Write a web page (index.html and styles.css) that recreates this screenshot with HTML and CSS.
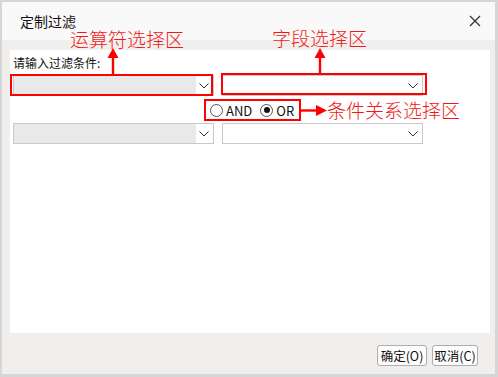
FILE: index.html
```html
<!DOCTYPE html>
<html>
<head>
    <meta charset="UTF-8">
    <title>定制过滤</title>
    <link rel="stylesheet" href="styles.css">
</head>
<body>
    <div class="window">
        <div class="titlebar">
            <span class="title">定制过滤</span>
            <svg class="close" width="12" height="12" viewBox="0 0 12 12">
                <path d="M1 1 L11 11 M11 1 L1 11" stroke="#333" stroke-width="1.3" fill="none"/>
            </svg>
        </div>

        <div class="content">
            <div class="panel">
                <div class="hint">请输入过滤条件:</div>

                <div class="row">
                    <div class="combo combo-disabled">
                        <span class="combo-value"></span>
                        <span class="combo-btn">
                            <svg width="10" height="6" viewBox="0 0 10 6"><polyline points="0.5,0.5 5,5 9.5,0.5" stroke="#333" fill="none"/></svg>
                        </span>
                    </div>
                    <div class="combo">
                        <span class="combo-value"></span>
                        <span class="combo-btn">
                            <svg width="10" height="6" viewBox="0 0 10 6"><polyline points="0.5,0.5 5,5 9.5,0.5" stroke="#333" fill="none"/></svg>
                        </span>
                    </div>
                </div>

                <div class="logic">
                    <label class="radio"><span class="dot"></span>AND</label>
                    <label class="radio checked"><span class="dot"></span>OR</label>
                </div>

                <div class="row">
                    <div class="combo combo-disabled">
                        <span class="combo-value"></span>
                        <span class="combo-btn">
                            <svg width="10" height="6" viewBox="0 0 10 6"><polyline points="0.5,0.5 5,5 9.5,0.5" stroke="#333" fill="none"/></svg>
                        </span>
                    </div>
                    <div class="combo">
                        <span class="combo-value"></span>
                        <span class="combo-btn">
                            <svg width="10" height="6" viewBox="0 0 10 6"><polyline points="0.5,0.5 5,5 9.5,0.5" stroke="#333" fill="none"/></svg>
                        </span>
                    </div>
                </div>
            </div>

            <div class="footer">
                <button class="btn btn-ok">确定(O)</button>
                <button class="btn btn-cancel">取消(C)</button>
            </div>
        </div>

        <!-- annotations drawn over the dialog -->
        <div class="mark mark-op"></div>
        <div class="mark mark-field"></div>
        <div class="mark mark-logic"></div>

        <span class="note note-op">运算符选择区</span>
        <span class="note note-field">字段选择区</span>
        <span class="note note-logic">条件关系选择区</span>

        <svg class="arrows" width="498" height="377" viewBox="0 0 498 377">
            <path d="M113 57 L113 74" stroke="#f00" stroke-width="2.4"/>
            <polygon points="113,48 107.5,58 118.5,58" fill="#f00"/>
            <path d="M320 57 L320 73" stroke="#f00" stroke-width="2.4"/>
            <polygon points="320,48 314.5,58 325.5,58" fill="#f00"/>
            <path d="M301 110.5 L317 110.5" stroke="#f00" stroke-width="2.4"/>
            <polygon points="327,110.5 316,105 316,116" fill="#f00"/>
        </svg>
    </div>
</body>
</html>
```

FILE: styles.css
```css
* {
    margin: 0;
    padding: 0;
    box-sizing: border-box;
}

body {
    font-family: "Noto Sans CJK SC", "Microsoft YaHei", sans-serif;
    font-size: 12px;
    color: #000;
    background: #fff;
}

.window {
    position: relative;
    width: 498px;
    height: 377px;
    border-style: solid;
    border-color: #d6d6d6;
    border-width: 2px 3px 3px 2px;
    background: #f0efed;
    display: flex;
    flex-direction: column;
}

.titlebar {
    height: 38px;
    background: #f9f9f9;
    display: flex;
    align-items: center;
    justify-content: space-between;
    padding: 0 14px 0 18px;
}

.title {
    font-size: 14px;
    color: #111;
    padding-bottom: 1px;
}

.close {
    display: block;
}

.content {
    flex: 1;
    display: flex;
    flex-direction: column;
    padding: 10px 5px 0 8px;
}

.panel {
    height: 283px;
    background: #fff;
    padding: 5px 0 0 3px;
}

.hint {
    height: 16px;
    line-height: 16px;
    color: #111;
    margin-bottom: 4px;
}

.row {
    display: flex;
    gap: 8px;
}

.combo {
    width: 201px;
    height: 21px;
    border: 1px solid #c9c9c9;
    background: #fff;
    display: flex;
}

.combo-value {
    flex: 1;
}

.combo-disabled .combo-value {
    background: #e9e9e9;
}

.combo-btn {
    width: 17px;
    display: flex;
    align-items: center;
    justify-content: center;
    background: #fff;
    padding-right: 2px;
}

.combo-btn svg {
    display: block;
}

.logic {
    height: 20px;
    margin: 4px 0 3px 197px;
    display: flex;
    align-items: center;
    gap: 8px;
    font-size: 13px;
}

.radio {
    display: flex;
    align-items: center;
    gap: 3px;
    color: #111;
}

.dot {
    width: 13px;
    height: 13px;
    border: 1px solid #555;
    border-radius: 50%;
    background: #fff;
    position: relative;
}

.radio.checked .dot::after {
    content: '';
    position: absolute;
    left: 2.5px;
    top: 2.5px;
    width: 6px;
    height: 6px;
    border-radius: 50%;
    background: #111;
}

.footer {
    flex: 1;
    display: flex;
    justify-content: flex-end;
    align-items: flex-start;
    gap: 5px;
    padding: 12px 12px 0 0;
}

.btn {
    height: 21px;
    padding: 0;
    border: 1px solid #adadad;
    border-radius: 3px;
    background: #fdfdfd;
    font-family: inherit;
    font-size: 12.5px;
    color: #111;
}

.btn-ok {
    width: 50px;
}

.btn-cancel {
    width: 46px;
}

/* annotations */
.mark {
    position: absolute;
    border: 2px solid #f00;
}

.mark-op {
    left: 8px;
    top: 72px;
    width: 203px;
    height: 22px;
}

.mark-field {
    left: 219px;
    top: 71px;
    width: 206px;
    height: 22px;
}

.mark-logic {
    left: 202px;
    top: 97px;
    width: 97px;
    height: 22px;
}

.note {
    position: absolute;
    font-size: 19px;
    font-weight: 300;
    line-height: 19px;
    color: #f01818;
    white-space: nowrap;
}

.note-op {
    left: 68px;
    top: 27px;
}

.note-field {
    left: 270px;
    top: 26px;
}

.note-logic {
    left: 325px;
    top: 98px;
}

.arrows {
    position: absolute;
    left: -2px;
    top: -2px;
    pointer-events: none;
}
```
